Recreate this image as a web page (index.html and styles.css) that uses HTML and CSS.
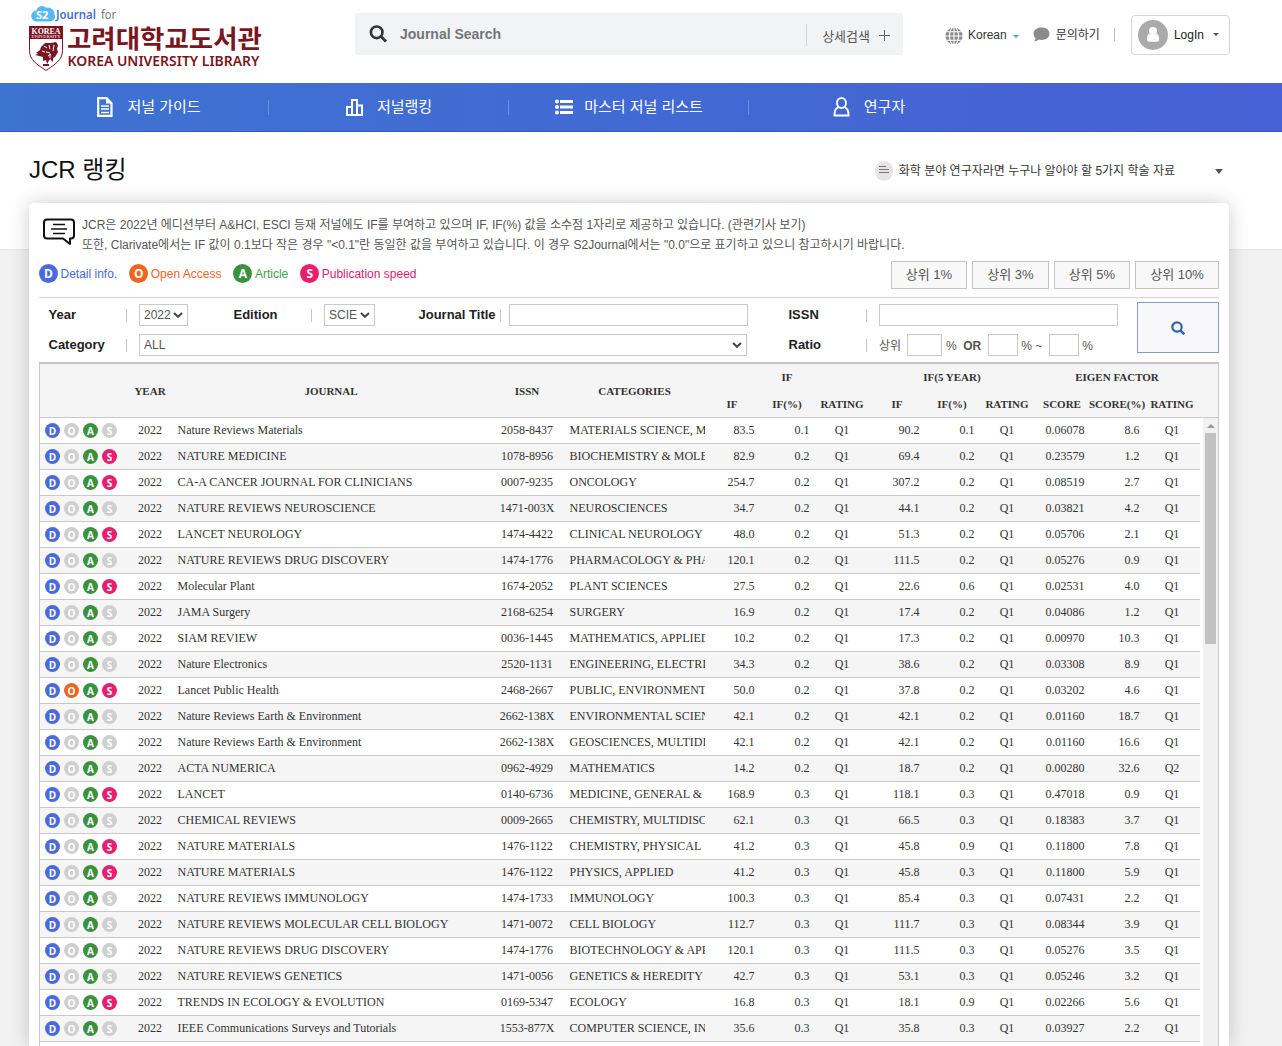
FILE: index.html
```html
<!DOCTYPE html>
<html lang="ko">
<head>
<meta charset="utf-8">
<title>JCR 랭킹</title>
<link rel="stylesheet" href="styles.css">
</head>
<body>
<header class="header">
  <a class="logo">
    <svg width="236" height="70" viewBox="0 0 236 70">
      <g fill="#57b9f3"><circle cx="8" cy="12" r="5.8"/><circle cx="13" cy="7.500" r="5.500"/><circle cx="19" cy="10" r="6.500"/><rect x="6" y="8" width="20" height="9.500" rx="4.700"/></g>
      <text x="7" y="15" class="lg-s2">S2</text>
      <text x="27" y="15" class="lg-journal" textLength="40" lengthAdjust="spacingAndGlyphs">Journal</text>
      <text x="72" y="15" class="lg-for" textLength="15" lengthAdjust="spacingAndGlyphs">for</text>
      <path d="M.5 22.500h33v24c0 10-8 14-16.500 20C8.500 60.500.5 56.500.5 46.500z" fill="#fff" stroke="#7a1622"/>
      <path d="M0 22h34v13H0z" fill="#7a1622"/>
      <text x="2.500" y="29.500" class="lg-k" textLength="29" lengthAdjust="spacingAndGlyphs">KOREA</text>
      <text x="2.500" y="34" class="lg-u" textLength="29" lengthAdjust="spacingAndGlyphs">UNIVERSITY</text>
      <path d="M7 49l4-3 1-3 4-4 6 0 5-1 2 3-1 4 1 3-3 5-2 1 0 4-3-3-3 5-1-4-3 1 0-4-4-1-4-1 3-1zM14 60h6v2h-6z" fill="#7a1622"/>
      <path d="M15 42l3 2m2-3l1 4m4-4l-1 6m-7 1l4 1m-2 3l3-2m-9-3l3 1m5 2v4" stroke="#fff" fill="none"/>
      <text x="38" y="44" class="lg-ko" textLength="195" lengthAdjust="spacingAndGlyphs">고려대학교도서관</text>
      <text x="38.500" y="62" class="lg-en" textLength="192" lengthAdjust="spacingAndGlyphs">KOREA UNIVERSITY LIBRARY</text>
    </svg>
  </a>
  <div class="search">
    <svg width="18" height="18" viewBox="0 0 18 18" fill="none" stroke="#333"><circle cx="7.700" cy="7.300" r="5.800" stroke-width="2.600"/><path d="M12 11.500l5 5" stroke-width="3"/></svg>
    <span class="search-label">Journal Search</span>
    <span class="search-detail">상세검색<svg width="11" height="11" viewBox="0 0 11 11" stroke="#666"><path d="M5.500 0v11M0 5.500h11"/></svg></span>
  </div>
  <div class="tools">
    <svg class="globe" width="18" height="18" viewBox="0 0 18 18"><circle cx="9" cy="9" r="8.600" fill="#8b8b8b"/><g fill="none" stroke="#fff" stroke-width="1.100"><ellipse cx="9" cy="9" rx="4.500" ry="9"/><path d="M9 0v18M0 9h18M1.500 4.700h15M1.500 13.300h15"/></g></svg>
    <span class="lang">Korean</span><i class="caret blue"></i>
    <svg class="bubble" width="17" height="15" viewBox="0 0 17 15"><path d="M8.500.5c4.700 0 8 2.700 8 6.200s-3.300 6.200-8 6.200c-1 0-2-.1-2.800-.4C4 14 2.500 14.300 1 14.300c1-1 1.500-2 1.500-3.300C1.200 9.900.5 8.400.5 6.700.5 3.200 3.800.5 8.500.5z" fill="#8b8b8b"/></svg>
    <span class="ask">문의하기</span><i class="bar"></i>
    <a class="login"><svg width="30" height="30" viewBox="0 0 30 30"><circle cx="15" cy="15" r="15" fill="#aaa"/><circle cx="15" cy="11" r="4" fill="#fff"/><path d="M11.500 13.500c-2 1.200-3 3.500-2.500 6.500.1 1.300.7 1.700 2 1.700h8c1.300 0 1.900-.4 2-1.700.5-3-.5-5.300-2.500-6.500-1.500 2-5.500 2-7 0z" fill="#fff"/></svg><span>LogIn</span><i class="caret"></i></a>
  </div>
</header>
<nav class="nav">
  <a><svg width="16" height="20" viewBox="0 0 16 20"><path d="M1.200 1.200h8.300l5 5v12.600H1.200z" fill="none" stroke="#fff" stroke-width="2.200"/><path d="M9 0l6.500 6.500H9z" fill="#fff"/><path d="M4 9h8M4 12h8M4 15.500h8" stroke="#fff" stroke-width="1.700"/></svg><span>저널 가이드</span></a>
  <a><svg width="17" height="17" viewBox="0 0 17 17" fill="none" stroke="#fff" stroke-width="2"><path d="M1 16V8h5v8zM6 16V1h5v15zM11 16V6.500h5V16zM0 16h17"/></svg><span>저널랭킹</span></a>
  <a class="list"><svg width="18" height="16" viewBox="0 0 18 16" fill="#fff"><circle cx="2" cy="2.500" r="2"/><circle cx="2" cy="8" r="2"/><circle cx="2" cy="13.500" r="2"/><path d="M5 1h13v3H5zM5 6.500h13v3H5zM5 12h13v3H5z"/></svg><span>마스터 저널 리스트</span></a>
  <a><svg width="17" height="20" viewBox="0 0 17 20" fill="none" stroke="#fff" stroke-width="2"><ellipse cx="8.500" cy="6" rx="4.500" ry="5"/><path d="M5.500 10C2 12 1.500 14 1.500 18.500h14c0-4.500-.5-6.500-4-8.500"/></svg><span>연구자</span></a>
</nav>
<div class="titlebar">
  <h1>JCR 랭킹</h1>
  <div class="notice"><span class="notice-ic"><i></i><i></i><i></i></span><span class="notice-text">화학 분야 연구자라면 누구나 알아야 할 5가지 학술 자료</span><i class="caret big"></i></div>
</div>
<main class="card">
  <div class="info">
    <svg width="32" height="28" viewBox="0 0 32 28" fill="none" stroke="#111" stroke-width="2"><path d="M4 1.500h24q3 0 3 3v13q0 3-3 3h-1v5.500l-7-5.500H4q-3 0-3-3v-13q0-3 3-3z" stroke-linejoin="round"/><path d="M10 6.500h12M8 11h16M10 15.500h12" stroke-width="1.500"/></svg>
    <p>JCR은 2022년 에디션부터 A&amp;HCI, ESCI 등재 저널에도 IF를 부여하고 있으며 IF, IF(%) 값을 소수점 1자리로 제공하고 있습니다. (관련기사 보기)<br>또한, Clarivate에서는 IF 값이 0.1보다 작은 경우 "&lt;0.1"란 동일한 값을 부여하고 있습니다. 이 경우 S2Journal에서는 "0.0"으로 표기하고 있으니 참고하시기 바랍니다.</p>
  </div>
  <div class="legend">
    <span class="key kd"><b class="dot d">D</b>Detail info.</span>
    <span class="key ko"><b class="dot o">O</b>Open Access</span>
    <span class="key ka"><b class="dot a">A</b>Article</span>
    <span class="key ks"><b class="dot s">S</b>Publication speed</span>
    <div class="tops"><a>상위 1%</a><a class="mid">상위 3%</a><a>상위 5%</a><a class="wide">상위 10%</a></div>
  </div>
  <div class="filters">
    <div class="fields">
      <label>Year</label><div class="cell"><span class="sel year">2022<svg class="chev" viewBox="0 0 10 6"><path d="M1 1l4 3.800L9 1"/></svg></span></div>
      <label>Edition</label><div class="cell"><span class="sel edition">SCIE<svg class="chev" viewBox="0 0 10 6"><path d="M1 1l4 3.800L9 1"/></svg></span></div>
      <label class="tight">Journal Title</label><div class="cell"><span class="inp"></span></div>
      <label>ISSN</label><div class="cell"><span class="inp"></span></div>
      <label>Category</label><div class="cell span"><span class="sel cat">ALL<svg class="chev" viewBox="0 0 10 6"><path d="M1 1l4 3.800L9 1"/></svg></span></div>
      <label>Ratio</label><div class="cell ratio"><span class="r1">상위</span><span class="inp w35"></span><span class="r2">%</span><b>OR</b><span class="inp w30"></span><span class="r3">% ~</span><span class="inp w30"></span><span class="r4">%</span></div>
    </div>
    <a class="go"><svg width="14" height="14" viewBox="0 0 14 14" fill="none" stroke="#3262ab"><circle cx="6" cy="6" r="4.700" stroke-width="2.200"/><path d="M9.300 9.300l4 4" stroke-width="2.500"/></svg></a>
  </div>
  <section class="grid">
    <div class="head">
      <span class="tall"></span><span class="tall">YEAR</span><span class="tall">JOURNAL</span><span class="tall">ISSN</span><span class="tall">CATEGORIES</span>
      <span class="group">IF</span><span class="group">IF(5 YEAR)</span><span class="group">EIGEN FACTOR</span>
      <span>IF</span><span>IF(%)</span><span>RATING</span><span>IF</span><span>IF(%)</span><span>RATING</span><span>SCORE</span><span>SCORE(%)</span><span>RATING</span>
    </div>
    <div class="body">
      <div class="rows" id="rows"></div>
      <div class="scroll"><i class="up"></i><i class="thumb"></i></div>
    </div>
  </section>
</main>
<script src="rows.js"></script>
</body>
</html>
```
FILE: styles.css
```css
* { box-sizing: border-box; }
body { margin: 0; height: 1046px; overflow: hidden; display: flex; flex-direction: column; background: linear-gradient(#fff 249px, #e6e6e6 249px, #e6e6e6 250px, #f2f2f2 250px); color: #333; font-family: "Liberation Sans", "Noto Sans CJK KR", sans-serif; font-size: 12px; }
svg { flex: none; display: block; }
span, a, label, b { white-space: nowrap; }

.header { height: 83px; flex: none; display: flex; padding-left: 29px; background: #fff; }
.logo { width: 326px; padding-top: 4px; }
.lg-s2 { font: bold 11px "Noto Sans", sans-serif; fill: #fff; }
.lg-journal { font: 600 12px "Noto Sans", sans-serif; fill: #4a6fd0; }
.lg-for { font: 12px "Noto Sans", sans-serif; fill: #777; }
.lg-k { font: bold 7.5px "Liberation Serif", serif; fill: #fff; }
.lg-u { font: bold 4px "Liberation Serif", serif; fill: #e8cdd0; }
.lg-ko { font: bold 25px "Noto Sans CJK KR", sans-serif; fill: #7a1622; }
.lg-en { font: 600 14px "Noto Sans", sans-serif; fill: #7a1622; }

.search { width: 548px; height: 42px; margin-top: 13px; background: #f1f3f5; border-radius: 3px; display: flex; align-items: center; padding-left: 14px; }
.search-label { margin-left: 13px; font-size: 14px; font-weight: bold; color: #757575; }
.search-detail { margin-left: auto; display: flex; align-items: center; gap: 9px; height: 22px; margin-top: 1px; padding: 2px 13px 0 15px; border-left: 1px solid #d0d2d4; font-size: 13px; color: #555; }
.tools { display: flex; height: 69px; align-items: center; padding-left: 42px; }
.globe { margin-top: 3px; }
.lang { margin-left: 5px; }
.caret { display: block; border: 3px solid transparent; border-top-color: #555; border-bottom: 0; }
.caret.blue { border-top-color: #4a9fd8; margin: 4px 14px 0 6px; }
.bubble { margin-right: 6px; }
.ask { margin-right: 14px; margin-top: -2px; }
.bar { width: 1px; height: 13px; background: #bbb; }
.login { display: flex; align-items: center; width: 99px; height: 40px; margin-left: 16px; padding-left: 6px; border: 1px solid #d5d5d5; border-radius: 4px; color: #222; }
.login span { margin: 0 9px 0 6px; }

.nav { flex: none; height: 49px; padding-left: 29px; display: flex; background: linear-gradient(90deg, #3d73d1, #4760d5); border-bottom: 1px solid #3659ba; }
.nav a { position: relative; width: 240px; display: flex; align-items: center; justify-content: center; gap: 14px; color: #fff; font-size: 15px; }
.nav a.list { gap: 11px; }
.nav a + a::before { content: ""; position: absolute; left: -1px; top: 17px; height: 15px; width: 1px; background: #6b8ee0; }
.nav span { margin-top: -4px; }

.titlebar { flex: none; height: 71px; display: flex; padding: 0 59px 0 29px; }
h1 { margin: 18px 0 0; line-height: 40px; font-size: 24px; font-weight: normal; color: #111; }
.notice { margin-left: auto; height: 20px; margin-top: 29px; display: flex; align-items: center; }
.notice-ic { width: 18px; height: 20px; border-radius: 9px; background: #e6e4e4; padding: 5px 4px; display: flex; flex-direction: column; gap: 2px; }
.notice-ic i { height: 1px; background: #777; }
.notice-ic i:first-child { width: 7px; }
.notice-text { margin: -4px 40px 0 6px; }
.caret.big { border-width: 5px 4px 0; }

.card { width: 1200px; height: 843px; flex: none; overflow: clip; overflow-clip-margin: 30px; margin-left: 29px; padding: 0 10px; background: #fff; border-radius: 5px 5px 0 0; box-shadow: 0 0 20px rgba(0,0,0,.2); }
.info { display: flex; padding: 12px 0 0 4px; height: 58px; gap: 7px; color: #555; }
.info svg { margin-top: 3px; }
.info p { margin: 0; line-height: 20px; white-space: nowrap; }
.legend { height: 37px; display: flex; align-items: flex-start; border-bottom: 1px solid #d2d2d2; }
.key { display: flex; align-items: center; gap: 2.5px; margin-top: 3px; margin-right: 12px; }
.dot { width: 19px; height: 19px; border-radius: 50%; color: #fff; display: flex; align-items: center; justify-content: center; font: bold 12px "Open Sans", sans-serif; }
.d { background: #4a69dc; } .o { background: #ed6423; } .a { background: #3a923e; } .s { background: #e91e6c; }
.kd { color: #4a69cc; } .ko { color: #ed6423; } .ka { color: #47a04b; } .ks { color: #d81b75; }
.tops { margin-left: auto; display: flex; gap: 5px; }
.tops a { width: 76px; height: 28px; border: 1px solid #c4c4c4; background: #f8f8f8; font-size: 13px; color: #555; text-align: center; line-height: 26px; }
.tops a.mid { width: 77px; }
.tops a.wide { width: 84px; }

.filters { height: 64px; display: flex; justify-content: space-between; padding-top: 4px; }
.fields { display: grid; grid-template-columns: 100px 85px 100px 85px 100px 270px 100px 240px; grid-template-rows: 22px 22px; row-gap: 8px; padding-top: 2px; }
.fields label { width: 78px; margin-left: 9.5px; height: 13px; margin-top: 5px; line-height: 11px; border-right: 1px solid #c4c4c4; font-size: 13px; font-weight: bold; color: #222; }
.fields label.tight { width: 82px; }
.cell { display: flex; color: #555; }
.span { grid-column: span 5; }
.inp { width: 239px; height: 22px; border: 1px solid #c9c9c9; background: #fff; }
.sel { height: 22px; border: 1px solid #c9c9c9; padding: 0 4px; line-height: 20px; display: flex; align-items: center; justify-content: space-between; }
.year { width: 49px; } .edition { width: 51px; } .cat { width: 608px; }
.chev { width: 10px; height: 6px; fill: none; stroke: #444; stroke-width: 2; }
.w35 { width: 35px; } .w30 { width: 30px; }
.ratio { line-height: 25px; }
.r1 { margin-right: 6px; } .r2 { margin: 0 6.5px 0 4px; } .ratio b { margin-right: 7px; } .r3 { margin: 0 7px 0 3px; } .r4 { margin-left: 3px; }
.go { width: 82px; height: 51px; border: 1px solid #869cc4; background: #f8f8fa; display: flex; align-items: center; justify-content: center; }

.grid { border: 1px solid #c8c8c8; border-top: 2px solid #c4c4c4; font-family: "Liberation Serif", serif; }
.head, .row { display: grid; grid-template-columns: 87.5px 45px 317px 75px 140px repeat(9, 55px); }
.head { height: 54px; grid-template-rows: 26px 27px; background: #f5f5f5; border-bottom: 1px solid #c8c8c8; font-size: 11px; font-weight: bold; color: #333; }
.head span { display: flex; align-items: center; justify-content: center; }
.head .tall { grid-row: span 2; }
.head .group { grid-column: span 3; }
.body { display: flex; justify-content: space-between; }
.rows { width: 1160px; }
.row { height: 26px; line-height: 24px; border-bottom: 1px solid #c8c8c8; background: #fff; }
.row:nth-child(even) { background: #f5f5f5; }
.row > span { overflow: hidden; text-align: center; }
.row > .l { text-align: left; padding-left: 5px; }
.row > .r { text-align: right; padding-right: 5px; }
.row .icons { display: flex; align-items: center; gap: 4px; padding-left: 5px; }
.icons .dot { width: 15px; height: 15px; font-size: 10px; font-weight: 700; }
.icons .off { background: #cfcfcf; }
.scroll { width: 15px; background: #f1f1f1; display: flex; flex-direction: column; align-items: center; }
.up { margin: 6px 0 5px; border: 4px solid transparent; border-top: 0; border-bottom-color: #999; }
.thumb { width: 11px; height: 211px; background: #c1c1c1; }
```
FILE: rows.js
```javascript
// active badges | journal | issn | category | nine figures
const data = `DA|Nature Reviews Materials|2058-8437|MATERIALS SCIENCE, MULTIDISCIPLINARY|83.5 0.1 Q1 90.2 0.1 Q1 0.06078 8.6 Q1
DAS|NATURE MEDICINE|1078-8956|BIOCHEMISTRY & MOLECULAR BIOLOGY|82.9 0.2 Q1 69.4 0.2 Q1 0.23579 1.2 Q1
DAS|CA-A CANCER JOURNAL FOR CLINICIANS|0007-9235|ONCOLOGY|254.7 0.2 Q1 307.2 0.2 Q1 0.08519 2.7 Q1
DA|NATURE REVIEWS NEUROSCIENCE|1471-003X|NEUROSCIENCES|34.7 0.2 Q1 44.1 0.2 Q1 0.03821 4.2 Q1
DAS|LANCET NEUROLOGY|1474-4422|CLINICAL NEUROLOGY|48.0 0.2 Q1 51.3 0.2 Q1 0.05706 2.1 Q1
DA|NATURE REVIEWS DRUG DISCOVERY|1474-1776|PHARMACOLOGY & PHARMACY|120.1 0.2 Q1 111.5 0.2 Q1 0.05276 0.9 Q1
DAS|Molecular Plant|1674-2052|PLANT SCIENCES|27.5 0.2 Q1 22.6 0.6 Q1 0.02531 4.0 Q1
DA|JAMA Surgery|2168-6254|SURGERY|16.9 0.2 Q1 17.4 0.2 Q1 0.04086 1.2 Q1
DA|SIAM REVIEW|0036-1445|MATHEMATICS, APPLIED|10.2 0.2 Q1 17.3 0.2 Q1 0.00970 10.3 Q1
DA|Nature Electronics|2520-1131|ENGINEERING, ELECTRICAL|34.3 0.2 Q1 38.6 0.2 Q1 0.03308 8.9 Q1
DOAS|Lancet Public Health|2468-2667|PUBLIC, ENVIRONMENTAL|50.0 0.2 Q1 37.8 0.2 Q1 0.03202 4.6 Q1
DA|Nature Reviews Earth & Environment|2662-138X|ENVIRONMENTAL SCIENCES|42.1 0.2 Q1 42.1 0.2 Q1 0.01160 18.7 Q1
DA|Nature Reviews Earth & Environment|2662-138X|GEOSCIENCES, MULTIDISCIPLINARY|42.1 0.2 Q1 42.1 0.2 Q1 0.01160 16.6 Q1
DA|ACTA NUMERICA|0962-4929|MATHEMATICS|14.2 0.2 Q1 18.7 0.2 Q1 0.00280 32.6 Q2
DAS|LANCET|0140-6736|MEDICINE, GENERAL & INTERNAL|168.9 0.3 Q1 118.1 0.3 Q1 0.47018 0.9 Q1
DA|CHEMICAL REVIEWS|0009-2665|CHEMISTRY, MULTIDISCIPLINARY|62.1 0.3 Q1 66.5 0.3 Q1 0.18383 3.7 Q1
DAS|NATURE MATERIALS|1476-1122|CHEMISTRY, PHYSICAL|41.2 0.3 Q1 45.8 0.9 Q1 0.11800 7.8 Q1
DAS|NATURE MATERIALS|1476-1122|PHYSICS, APPLIED|41.2 0.3 Q1 45.8 0.3 Q1 0.11800 5.9 Q1
DA|NATURE REVIEWS IMMUNOLOGY|1474-1733|IMMUNOLOGY|100.3 0.3 Q1 85.4 0.3 Q1 0.07431 2.2 Q1
DA|NATURE REVIEWS MOLECULAR CELL BIOLOGY|1471-0072|CELL BIOLOGY|112.7 0.3 Q1 111.7 0.3 Q1 0.08344 3.9 Q1
DA|NATURE REVIEWS DRUG DISCOVERY|1474-1776|BIOTECHNOLOGY & APPLIED|120.1 0.3 Q1 111.5 0.3 Q1 0.05276 3.5 Q1
DA|NATURE REVIEWS GENETICS|1471-0056|GENETICS & HEREDITY|42.7 0.3 Q1 53.1 0.3 Q1 0.05246 3.2 Q1
DAS|TRENDS IN ECOLOGY & EVOLUTION|0169-5347|ECOLOGY|16.8 0.3 Q1 18.1 0.9 Q1 0.02266 5.6 Q1
DA|IEEE Communications Surveys and Tutorials|1553-877X|COMPUTER SCIENCE, INFORMATION|35.6 0.3 Q1 35.8 0.3 Q1 0.03927 2.2 Q1`;

const esc = t => t.replace(/&/g, "&amp;");
document.getElementById("rows").innerHTML = data.split("\n").map(line => {
  const [on, journal, issn, category, figures] = line.split("|");
  const icons = [..."DOAS"].map(c => `<b class="dot ${on.includes(c) ? c.toLowerCase() : "off"}">${c}</b>`).join("");
  const cells = figures.split(" ").map((v, i) => `<span class="${i % 3 === 2 ? "c" : "r"}">${v}</span>`).join("");
  return `<div class="row"><span class="icons">${icons}</span><span>2022</span><span class="l">${esc(journal)}</span><span>${issn}</span><span class="l">${esc(category)}</span>${cells}</div>`;
}).join("") + '<div class="row"></div>';
```
